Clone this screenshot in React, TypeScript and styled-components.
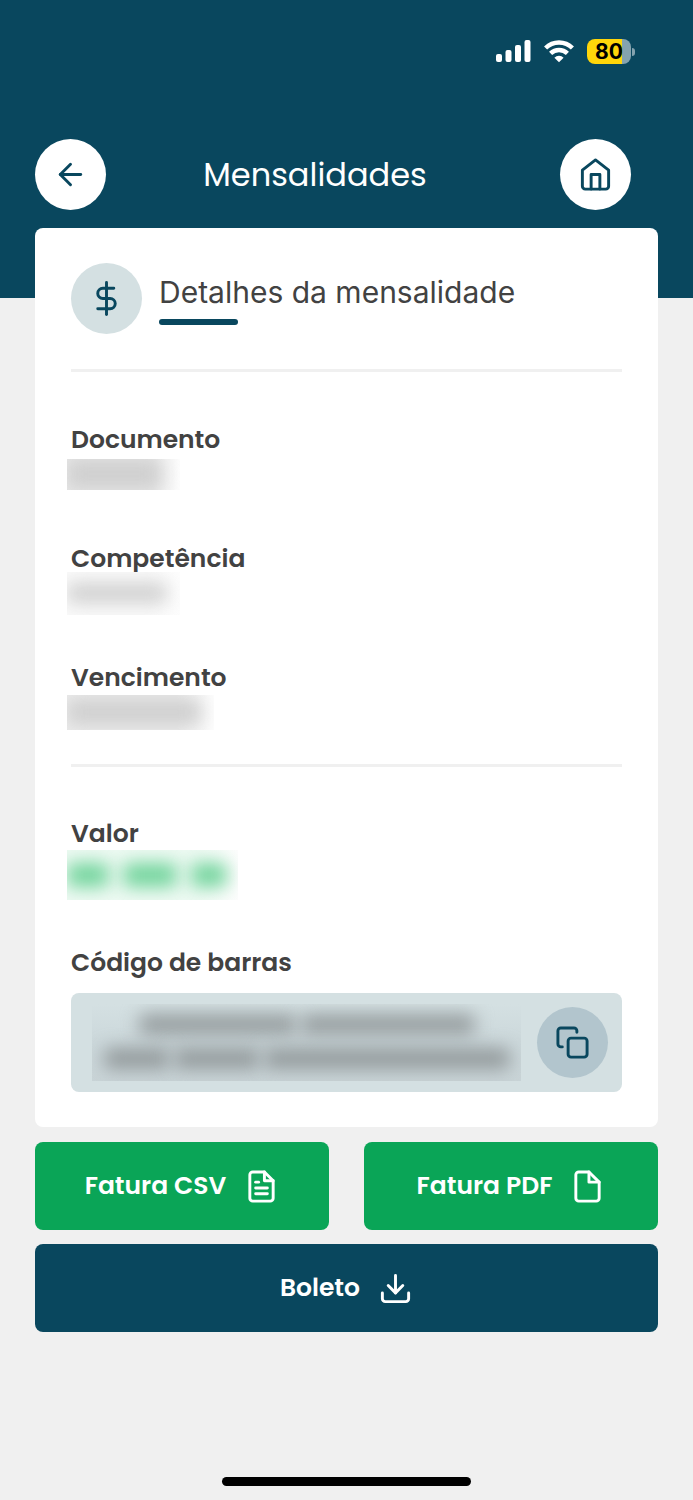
import React from "react";
import styled, { createGlobalStyle } from "styled-components";
import {
  FiArrowLeft,
  FiCopy,
  FiDollarSign,
  FiDownload,
  FiFile,
  FiFileText,
  FiHome,
} from "react-icons/fi";

const navy = "#09475e";
const green = "#0aa557";
const mist = "#d4e0e2";
const page = "#f0f0f0";
const ink = "#424242";
const iconSize = 35;

const GlobalStyle = createGlobalStyle`
  * { box-sizing: border-box; }
  body {
    margin: 0;
    background: ${page};
    color: ${ink};
    font-family: Poppins, Inter, "Liberation Sans", sans-serif;
  }
  button { font: inherit; border: 0; padding: 0; cursor: pointer; }
  h1, h2, dl, dt, dd { margin: 0; }
`;

const Screen = styled.div`
  min-height: 100vh;
  display: flex;
  flex-direction: column;
`;

const Top = styled.header`
  background: ${navy};
  color: #fff;
  padding-bottom: 88px;
`;

const StatusBar = styled.div`
  display: flex;
  justify-content: flex-end;
  align-items: center;
  gap: 13px;
  padding: 39px 58px 0 0;
  height: 64px;
`;

const Battery = styled.div`
  display: flex;
  align-items: center;
  gap: 1px;
`;

const BatteryBody = styled.div`
  width: 44px;
  height: 25px;
  border-radius: 8px;
  background: linear-gradient(to right, #ffd60a 80%, #84a3af 80%);
  color: #000;
  font: 700 21px/25px Inter, sans-serif;
  text-align: center;
`;

const BatteryTip = styled.div`
  width: 3px;
  height: 8px;
  border-radius: 0 4px 4px 0;
  background: #84a3af;
`;

const NavBar = styled.nav`
  display: flex;
  align-items: center;
  padding: 75px 62px 0 35px;
`;

const Title = styled.h1`
  flex: 1;
  padding-right: 36px;
  text-align: center;
  font-size: 32px;
  font-weight: 400;
  line-height: 48px;
`;

const RoundButton = styled.button<{ $fill: string }>`
  flex: none;
  display: grid;
  place-items: center;
  width: 71px;
  height: 71px;
  border-radius: 50%;
  background: ${(p) => p.$fill};
  color: ${navy};
`;

const Badge = styled.div`
  flex: none;
  display: grid;
  place-items: center;
  width: 71px;
  height: 71px;
  border-radius: 50%;
  background: ${mist};
  color: ${navy};
`;

const Content = styled.main`
  margin-top: -70px;
  padding: 0 35px;
  display: flex;
  flex-direction: column;
  gap: 15px;
`;

const Card = styled.section`
  background: #fff;
  border-radius: 8px;
  padding: 35px 36px;
`;

const CardHeader = styled.div`
  display: flex;
  align-items: center;
  gap: 17px;
  padding-bottom: 35px;
  border-bottom: 3px solid ${page};
`;

const Heading = styled.h2`
  color: ${ink};
  font: 400 30px/38px Inter, "Liberation Sans", sans-serif;
  &::after {
    content: "";
    display: block;
    width: 79px;
    height: 6px;
    margin-top: 8px;
    border-radius: 3px;
    background: ${navy};
  }
`;

const Fields = styled.dl`
  display: flex;
  flex-direction: column;
  gap: 51px;
  padding: 50px 0 36px;
  border-bottom: 3px solid ${page};
`;

const Totals = styled.dl`
  display: flex;
  flex-direction: column;
  gap: 47px;
  padding-top: 49px;
`;

const Label = styled.dt`
  font-size: 25px;
  font-weight: 600;
  line-height: 36px;
`;

const Value = styled.dd<{ $height: number }>`
  display: flex;
  align-items: center;
  height: ${(p) => p.$height}px;
  margin-left: -4px;
`;

const Mask = styled.div<{ $width: number; $height: number; $fill: string }>`
  flex: none;
  display: flex;
  align-items: center;
  gap: 14px;
  overflow: hidden;
  width: ${(p) => p.$width}px;
  height: ${(p) => p.$height}px;
  background: linear-gradient(to right, ${(p) => p.$fill} 75%, #fdfdfd);
`;

const Smudge = styled.span<{ $width: number; $height: number; $color: string }>`
  flex: none;
  width: ${(p) => p.$width}px;
  height: ${(p) => p.$height}px;
  border-radius: 6px;
  background: ${(p) => p.$color};
  filter: blur(9px);
`;

const CodeBox = styled.dd`
  display: flex;
  align-items: center;
  justify-content: space-between;
  && {
    margin-top: 12px;
  }
  padding: 11px 14px 11px 21px;
  border-radius: 8px;
  background: ${mist};
`;

const CodeMask = styled.div`
  flex: 1;
  display: flex;
  flex-direction: column;
  align-items: center;
  gap: 13px;
  overflow: hidden;
  margin-right: 16px;
  padding: 10px 0 12px;
  background: linear-gradient(to top, #c9d4d7, #ccd8db 50%, ${mist});
`;

const CodeLine = styled.div`
  display: flex;
  gap: 4px;
`;

const Actions = styled.div`
  display: grid;
  grid-template-columns: 1fr 1fr;
  gap: 14px 35px;
`;

const ActionButton = styled.button<{ $fill: string; $wide?: boolean }>`
  grid-column: ${(p) => (p.$wide ? "1 / -1" : "auto")};
  display: flex;
  align-items: center;
  justify-content: center;
  gap: 18px;
  height: 88px;
  border-radius: 8px;
  background: ${(p) => p.$fill};
  color: #fff;
  && {
    font-size: 25px;
    font-weight: 600;
  }
`;

const HomeIndicator = styled.div`
  width: 36%;
  height: 9px;
  margin: auto auto 14px;
  border-radius: 5px;
  background: #000;
`;

const fields = [
  { label: "Documento", width: 113, height: 31, smudge: 94, thick: 30, fill: "#e8e8e8" },
  { label: "Competência", width: 113, height: 43, smudge: 100, thick: 20, fill: "#fafafa" },
  { label: "Vencimento", width: 147, height: 35, smudge: 134, thick: 26, fill: "#ececec" },
];

const SignalIcon = () => (
  <svg width="35" height="23" viewBox="0 0 35 23" fill="#fff" aria-hidden="true">
    <rect x="0" y="14" width="6" height="8" rx="2" />
    <rect x="9.500" y="10" width="6" height="12" rx="2" />
    <rect x="19" y="5" width="6" height="17" rx="2" />
    <rect x="28.500" y="0" width="6" height="22" rx="2" />
  </svg>
);

const WifiIcon = () => (
  <svg width="30" height="23" viewBox="0 0 30 23" fill="none" stroke="#fff" strokeWidth="4.400" aria-hidden="true">
    <path d="M1.600 8a19 19 0 0 1 26.800 0" />
    <path d="M6.600 13.400a12 12 0 0 1 16.800 0" />
    <path d="M15 22.300l-4.600-4.600a6.500 6.500 0 0 1 9.200 0z" fill="#fff" stroke="none" />
  </svg>
);

export default function App() {
  return (
    <Screen>
      <GlobalStyle />
      <Top>
        <StatusBar>
          <SignalIcon />
          <WifiIcon />
          <Battery>
            <BatteryBody>80</BatteryBody>
            <BatteryTip />
          </Battery>
        </StatusBar>
        <NavBar>
          <RoundButton $fill="#fff" aria-label="Voltar">
            <FiArrowLeft size={iconSize} />
          </RoundButton>
          <Title>Mensalidades</Title>
          <RoundButton $fill="#fff" aria-label="Início">
            <FiHome size={iconSize} />
          </RoundButton>
        </NavBar>
      </Top>
      <Content>
        <Card>
          <CardHeader>
            <Badge>
              <FiDollarSign size={iconSize} />
            </Badge>
            <Heading>Detalhes da mensalidade</Heading>
          </CardHeader>
          <Fields>
            {fields.map((f) => (
              <div key={f.label}>
                <Label>{f.label}</Label>
                <Value $height={32}>
                  <Mask $width={f.width} $height={f.height} $fill={f.fill}>
                    <Smudge $width={f.smudge} $height={f.thick} $color="#cfcfcf" />
                  </Mask>
                </Value>
              </div>
            ))}
          </Fields>
          <Totals>
            <div>
              <Label>Valor</Label>
              <Value $height={46}>
                <Mask $width={171} $height={50} $fill="#eefaf3">
                  <Smudge $width={42} $height={24} $color="#72d49c" />
                  <Smudge $width={54} $height={24} $color="#72d49c" />
                  <Smudge $width={36} $height={24} $color="#72d49c" />
                </Mask>
              </Value>
            </div>
            <div>
              <Label>Código de barras</Label>
              <CodeBox>
                <CodeMask>
                  <CodeLine>
                    <Smudge $width={158} $height={21} $color="#969d9f" />
                    <Smudge $width={174} $height={21} $color="#969d9f" />
                  </CodeLine>
                  <CodeLine>
                    <Smudge $width={66} $height={21} $color="#939a9c" />
                    <Smudge $width={86} $height={21} $color="#939a9c" />
                    <Smudge $width={246} $height={21} $color="#939a9c" />
                  </CodeLine>
                </CodeMask>
                <RoundButton $fill="#b2c5cd" aria-label="Copiar código de barras">
                  <FiCopy size={iconSize} />
                </RoundButton>
              </CodeBox>
            </div>
          </Totals>
        </Card>
        <Actions>
          <ActionButton $fill={green}>
            Fatura CSV
            <FiFileText size={iconSize} />
          </ActionButton>
          <ActionButton $fill={green}>
            Fatura PDF
            <FiFile size={iconSize} />
          </ActionButton>
          <ActionButton $fill={navy} $wide>
            Boleto
            <FiDownload size={iconSize} />
          </ActionButton>
        </Actions>
      </Content>
      <HomeIndicator />
    </Screen>
  );
}
